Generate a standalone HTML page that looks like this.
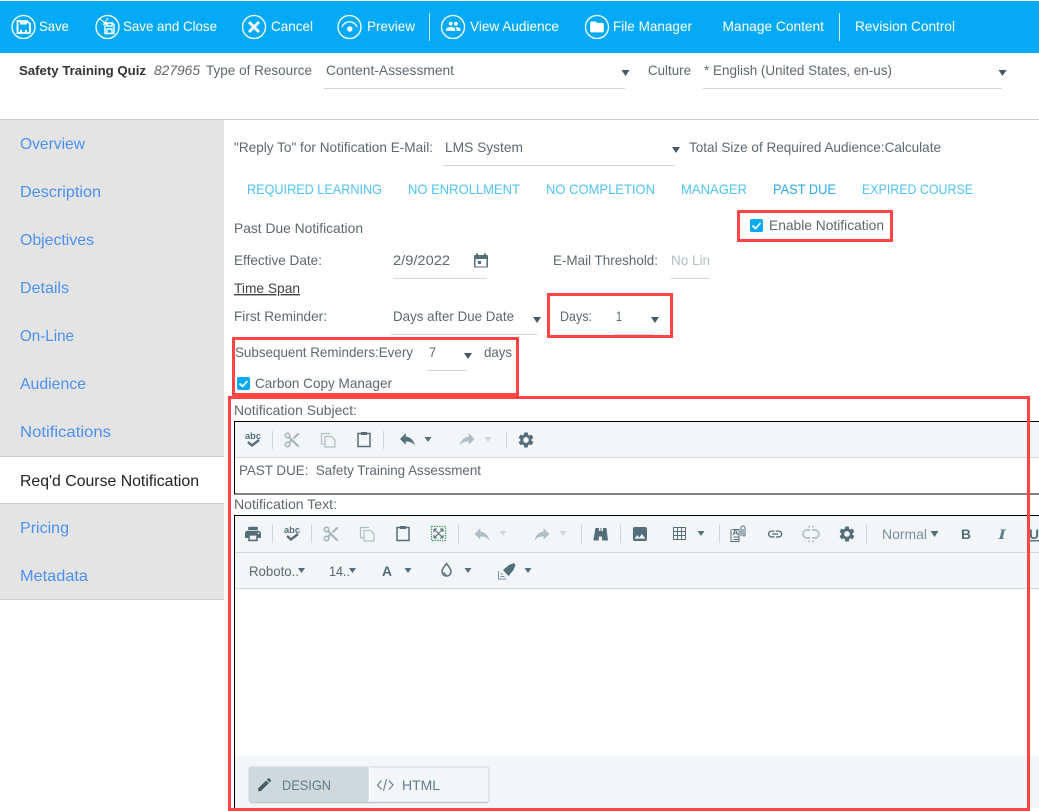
<!DOCTYPE html>
<html lang="en">
<head>
<meta charset="utf-8">
<title>Safety Training Quiz</title>
<style>
html,body{margin:0;padding:0;background:#fff;width:1039px;height:811px;overflow:hidden}
svg{display:block;position:absolute;left:0;top:0}
text{font-family:"Liberation Sans",sans-serif;font-size:14px;fill:#5c6870}
.w{fill:#fff}
.s{font-size:16px;fill:#4d90f0}
.t{fill:#4fc3f7;font-size:14px}
.l{stroke:#cfd8dc;stroke-width:1;fill:none}
.i{fill:#546e7a}
.d{fill:#b0bec5}
.r{fill:none;stroke:#ff4444;stroke-width:3}
</style>
</head>
<body>
<svg width="1039" height="811" viewBox="0 0 1039 811" xmlns="http://www.w3.org/2000/svg">
<defs>
<path id="gear" d="M19.14 12.94c.04-.3.06-.61.06-.94 0-.32-.02-.64-.07-.94l2.03-1.58c.18-.14.23-.41.12-.61l-1.92-3.32c-.12-.22-.37-.29-.59-.22l-2.39.96c-.5-.38-1.03-.7-1.62-.94l-.36-2.54c-.04-.24-.24-.41-.48-.41h-3.84c-.24 0-.43.17-.47.41l-.36 2.54c-.59.24-1.13.57-1.62.94l-2.39-.96c-.22-.08-.47 0-.59.22L2.74 8.87c-.12.21-.08.47.12.61l2.03 1.58c-.05.3-.09.63-.09.94s.02.64.07.94l-2.03 1.58c-.18.14-.23.41-.12.61l1.92 3.32c.12.22.37.29.59.22l2.39-.96c.5.38 1.03.7 1.62.94l.36 2.54c.05.24.24.41.48.41h3.84c.24 0 .44-.17.47-.41l.36-2.54c.59-.24 1.13-.56 1.62-.94l2.39.96c.22.08.47 0 .59-.22l1.92-3.32c.12-.22.07-.47-.12-.61l-2.01-1.58zM12 15.6c-1.98 0-3.6-1.62-3.6-3.6s1.62-3.6 3.6-3.6 3.6 1.62 3.6 3.6-1.62 3.6-3.6 3.6z"/>
<path id="undo" d="M10 9V5l-7 7 7 7v-4.100c5 0 8.500 1.600 11 5.100-1-5-4-10-11-11z"/>
<path id="redo" d="M14 9V5l7 7-7 7v-4.100c-5 0-8.500 1.600-11 5.100 1-5 4-10 11-11z"/>
<path id="cut" d="M9.64 7.64c.23-.5.36-1.05.36-1.64 0-2.21-1.79-4-4-4S2 3.79 2 6s1.79 4 4 4c.59 0 1.14-.13 1.64-.36L10 12l-2.36 2.36C7.14 14.13 6.59 14 6 14c-2.21 0-4 1.79-4 4s1.79 4 4 4 4-1.79 4-4c0-.59-.13-1.14-.36-1.64L12 14l7 7h3v-1L9.64 7.64zM6 8c-1.1 0-2-.89-2-2s.9-2 2-2 2 .89 2 2-.9 2-2 2zm0 12c-1.1 0-2-.89-2-2s.9-2 2-2 2 .89 2 2-.9 2-2 2zM19 3l-6 6 2 2 7-7V3z"/>
<path id="link" d="M3.9 12c0-1.71 1.39-3.1 3.1-3.1h4V7H7c-2.76 0-5 2.24-5 5s2.24 5 5 5h4v-1.9H7c-1.71 0-3.1-1.39-3.1-3.1zM8 13h8v-2H8v2zm9-6h-4v1.9h4c1.71 0 3.1 1.39 3.1 3.1s-1.39 3.1-3.1 3.1h-4V17h4c2.76 0 5-2.24 5-5s-2.24-5-5-5z"/>
<g id="copy" fill="none" stroke-width="1.200"><path d="M2-6.500h-8.500v10.500h3.500"/><path d="M-3-3.500h6.500l3.500 3.500v7h-10z"/></g>
<g id="paste"><path fill="none" stroke="#546e7a" stroke-width="1.500" d="M-3-6h-3v13H6V-6H3"/><rect x="-3" y="-7.500" width="6" height="3" fill="#546e7a"/></g>
<g id="abc"><text x="-8" y="0" style="font-size:9.500px;font-weight:bold;fill:#546e7a" textLength="16" lengthAdjust="spacingAndGlyphs">abc</text><path d="M-5 3l4 3.500L6 1" fill="none" stroke="#546e7a" stroke-width="2.400"/></g>
</defs>

<!-- top toolbar -->
<rect x="0" y="1" width="1039" height="52" fill="#05aaf6"/>
<g fill="none" stroke="#fff" stroke-width="1.300">
<circle cx="23.500" cy="27" r="11.500"/><circle cx="107.500" cy="27" r="11.500"/><circle cx="254" cy="27" r="11.500"/><circle cx="349.500" cy="27" r="11.500"/><circle cx="453" cy="27" r="11.500"/><circle cx="597" cy="27" r="11.500"/>
</g>
<path d="M17.500 21h9.500l3 3V33H17.500z" fill="none" stroke="#fff" stroke-width="1.800"/>
<rect x="20" y="21" width="7" height="3.500" fill="#fff"/><rect x="20" y="30" width="2" height="3" fill="#fff"/><rect x="25" y="30" width="2" height="3" fill="#fff"/>
<path d="M105 23h7.500l1.500 1.500V33.500h-9zM107 23v3h5v-3M107 29h5v4.500h-5z" fill="none" stroke="#fff" stroke-width="1.400"/>
<path d="M100 19l9 7M108 18l-5 7" stroke="#fff" stroke-width="1" fill="none"/>
<path d="M249 22l10 10M259 22l-10 10" stroke="#fff" stroke-width="2.800" fill="none"/>
<path d="M342 27a8 8 0 0 1 15 0" fill="none" stroke="#fff" stroke-width="1.300"/><circle cx="349.800" cy="29" r="2.700" fill="#fff"/>
<path transform="translate(445.500 18.500) scale(.65)" fill="#fff" d="M16 11c1.660 0 2.990-1.340 2.990-3S17.660 5 16 5c-1.660 0-3 1.340-3 3s1.340 3 3 3zm-8 0c1.660 0 2.990-1.340 2.990-3S9.660 5 8 5C6.340 5 5 6.340 5 8s1.340 3 3 3zm0 2c-2.330 0-7 1.170-7 3.500V19h14v-2.500c0-2.330-4.670-3.500-7-3.500zm8 0c-.29 0-.62.02-.97.05 1.160.84 1.970 1.970 1.970 3.450V19h6v-2.500c0-2.330-4.670-3.500-7-3.500z"/>
<path transform="translate(588.800 18.800) scale(.68)" fill="#fff" d="M10 4H4c-1.100 0-1.990.9-1.990 2L2 18c0 1.100.9 2 2 2h16c1.100 0 2-.9 2-2V8c0-1.100-.9-2-2-2h-8l-2-2z"/>
<path d="M429.500 13v28M839.500 13v28" stroke="#cfeefd" stroke-width="1"/>
<text class="w" x="39" y="31" textLength="30" lengthAdjust="spacingAndGlyphs">Save</text>
<text class="w" x="123" y="31" textLength="94" lengthAdjust="spacingAndGlyphs">Save and Close</text>
<text class="w" x="271" y="31" textLength="42" lengthAdjust="spacingAndGlyphs">Cancel</text>
<text class="w" x="367" y="31" textLength="48" lengthAdjust="spacingAndGlyphs">Preview</text>
<text class="w" x="470" y="31" textLength="89" lengthAdjust="spacingAndGlyphs">View Audience</text>
<text class="w" x="613" y="31" textLength="79" lengthAdjust="spacingAndGlyphs">File Manager</text>
<text class="w" x="722.500" y="31" textLength="101.500" lengthAdjust="spacingAndGlyphs">Manage Content</text>
<text class="w" x="855" y="31" textLength="100" lengthAdjust="spacingAndGlyphs">Revision Control</text>

<!-- header -->
<text x="19" y="75" style="font-weight:bold;fill:#333;font-size:13px" textLength="127" lengthAdjust="spacingAndGlyphs">Safety Training Quiz</text>
<text x="154" y="75" style="font-style:italic;fill:#666" textLength="46" lengthAdjust="spacingAndGlyphs">827965</text>
<text x="206" y="75" textLength="106" lengthAdjust="spacingAndGlyphs">Type of Resource</text>
<text x="326" y="75" textLength="128" lengthAdjust="spacingAndGlyphs">Content-Assessment</text>
<path class="l" d="M324 88.500h301M703 88.500h299"/>
<path d="M621.500 70h8l-4 6z M998.500 70h8l-4 6z" fill="#455a64"/>
<text x="648" y="75" textLength="43" lengthAdjust="spacingAndGlyphs">Culture</text>
<text x="704" y="75" textLength="188" lengthAdjust="spacingAndGlyphs">* English (United States, en-us)</text>
<path d="M0 119.500h1039" stroke="#cfcfcf" stroke-width="1"/>

<!-- sidebar -->
<rect x="0" y="120" width="224" height="480" fill="#e4e4e4"/>
<rect x="0" y="457" width="224" height="46" fill="#fff"/>
<path d="M0 456.500h224M0 503.500h224M0 599.500h224" stroke="#cfcfcf" stroke-width="1"/>
<text class="s" x="20" y="149" textLength="65" lengthAdjust="spacingAndGlyphs">Overview</text>
<text class="s" x="20" y="197" textLength="81" lengthAdjust="spacingAndGlyphs">Description</text>
<text class="s" x="20" y="245" textLength="74" lengthAdjust="spacingAndGlyphs">Objectives</text>
<text class="s" x="20" y="293" textLength="49" lengthAdjust="spacingAndGlyphs">Details</text>
<text class="s" x="20" y="341" textLength="54" lengthAdjust="spacingAndGlyphs">On-Line</text>
<text class="s" x="20" y="389" textLength="66" lengthAdjust="spacingAndGlyphs">Audience</text>
<text class="s" x="20" y="437" textLength="91" lengthAdjust="spacingAndGlyphs">Notifications</text>
<text class="s" x="20" y="486" textLength="179" lengthAdjust="spacingAndGlyphs" style="fill:#222">Req'd Course Notification</text>
<text class="s" x="20" y="533" textLength="49" lengthAdjust="spacingAndGlyphs">Pricing</text>
<text class="s" x="20" y="581" textLength="68" lengthAdjust="spacingAndGlyphs">Metadata</text>

<!-- form -->
<text x="234" y="152" textLength="199" lengthAdjust="spacingAndGlyphs">"Reply To" for Notification E-Mail:</text>
<text x="445" y="152" textLength="78" lengthAdjust="spacingAndGlyphs">LMS System</text>
<path class="l" d="M443 165.500h232"/>
<path d="M672 147h8l-4 6z" fill="#455a64"/>
<text x="689" y="152" textLength="252" lengthAdjust="spacingAndGlyphs">Total Size of Required Audience:Calculate</text>

<text class="t" x="247" y="194" textLength="135" lengthAdjust="spacingAndGlyphs">REQUIRED LEARNING</text>
<text class="t" x="408" y="194" textLength="112" lengthAdjust="spacingAndGlyphs">NO ENROLLMENT</text>
<text class="t" x="546" y="194" textLength="109" lengthAdjust="spacingAndGlyphs">NO COMPLETION</text>
<text class="t" x="681" y="194" textLength="66" lengthAdjust="spacingAndGlyphs">MANAGER</text>
<text class="t" x="773" y="194" textLength="63" lengthAdjust="spacingAndGlyphs" style="fill:#29a9ec">PAST DUE</text>
<text class="t" x="862" y="194" textLength="111" lengthAdjust="spacingAndGlyphs">EXPIRED COURSE</text>
<rect x="760" y="211" width="89" height="2" fill="#03a9f4"/>

<text x="234" y="233" textLength="129" lengthAdjust="spacingAndGlyphs">Past Due Notification</text>
<rect x="750" y="219" width="13" height="13" rx="2" fill="#05aaf6"/>
<path d="M752.500 225.500l3 3 5-5.500" fill="none" stroke="#fff" stroke-width="1.600"/>
<text x="769" y="230" textLength="115" lengthAdjust="spacingAndGlyphs">Enable Notification</text>

<text x="234" y="265" textLength="88" lengthAdjust="spacingAndGlyphs">Effective Date:</text>
<text x="393" y="265" textLength="57" lengthAdjust="spacingAndGlyphs">2/9/2022</text>
<path class="l" d="M393 278.500h94M671 278.500h39M391 334.500h146M614 334.500h40M427 370.500h40"/>
<path d="M476 253.500v1.500h-1a1 1 0 0 0-1 1v10.500a1 1 0 0 0 1 1h12a1 1 0 0 0 1-1V256a1 1 0 0 0-1-1h-1v-1.500h-2V255h-6v-1.500zM475.500 259h11v7.500h-11z" fill="#546e7a" fill-rule="evenodd"/>
<rect x="478" y="261" width="3" height="3" fill="#546e7a"/>
<text x="553" y="265" textLength="105" lengthAdjust="spacingAndGlyphs">E-Mail Threshold:</text>
<text x="671" y="265" textLength="39" lengthAdjust="spacingAndGlyphs" style="fill:#b0bec5">No Lin</text>
<text x="234" y="293" textLength="66" lengthAdjust="spacingAndGlyphs" style="text-decoration:underline;fill:#444">Time Span</text>
<text x="234" y="321" textLength="93" lengthAdjust="spacingAndGlyphs">First Reminder:</text>
<text x="393" y="321" textLength="121" lengthAdjust="spacingAndGlyphs">Days after Due Date</text>
<path d="M533 317h8l-4 6zM651 317h8l-4 6zM464 353h8l-4 6z" fill="#455a64"/>
<text x="560" y="321" textLength="32" lengthAdjust="spacingAndGlyphs">Days:</text>
<text x="616" y="321" textLength="6" lengthAdjust="spacingAndGlyphs">1</text>
<text x="235" y="357" textLength="178" lengthAdjust="spacingAndGlyphs">Subsequent Reminders:Every</text>
<text x="429" y="357" textLength="7" lengthAdjust="spacingAndGlyphs">7</text>
<text x="484" y="357" textLength="28" lengthAdjust="spacingAndGlyphs">days</text>
<rect x="237" y="377" width="13" height="13" rx="2" fill="#05aaf6"/>
<path d="M239.500 383.500l3 3 5-5.500" fill="none" stroke="#fff" stroke-width="1.600"/>
<text x="255" y="388" textLength="137" lengthAdjust="spacingAndGlyphs">Carbon Copy Manager</text>

<text x="234" y="415" textLength="123" lengthAdjust="spacingAndGlyphs">Notification Subject:</text>

<!-- subject editor -->
<rect x="235" y="422" width="804" height="35" fill="#f2f6f8"/>
<path d="M235 457.500h804" stroke="#cfd8dc"/>
<path d="M1039 421.500H234.500V494H1039" fill="none" stroke="#000" stroke-width="1"/>
<path d="M272.500 431v18M383.500 431v18M506.500 431v18" stroke="#cfd8dc"/>
<use href="#abc" x="253" y="439"/>
<use href="#cut" transform="translate(283 431) scale(.75)" fill="#a6b5bd"/>
<use href="#copy" x="328" y="440" stroke="#b0bec5"/>
<use href="#paste" x="364" y="439.500"/>
<use href="#undo" transform="translate(397.500 429) scale(.83)" fill="#546e7a"/>
<path d="M424.500 437h7l-3.500 5z" fill="#546e7a"/>
<use href="#redo" transform="translate(457.200 429) scale(.83)" fill="#b0bec5"/>
<path d="M484.500 437h7l-3.500 5z" fill="#cfd8dc"/>
<use href="#gear" transform="translate(516.600 430.600) scale(.78)" fill="#546e7a"/>
<text x="239" y="475" textLength="242" lengthAdjust="spacingAndGlyphs" xml:space="preserve">PAST DUE:  Safety Training Assessment</text>

<text x="234" y="509" textLength="103" lengthAdjust="spacingAndGlyphs">Notification Text:</text>

<!-- text editor -->
<rect x="235" y="516" width="804" height="72" fill="#f2f6f8"/>
<path d="M235 552.500h804M235 588.500h804" stroke="#cfd8dc"/>
<rect x="235" y="756" width="804" height="52" fill="#f2f6f8"/>
<path d="M1039 515.500H234.500V811" fill="none" stroke="#000" stroke-width="1"/>
<path d="M272.500 525v18M311.500 525v18M458.500 525v18M581.500 525v18M620.500 525v18M719.500 525v18M866.500 525v18" stroke="#cfd8dc"/>
<path transform="translate(243.400 524.400) scale(.8)" fill="#546e7a" d="M19 8H5c-1.660 0-3 1.340-3 3v6h4v4h12v-4h4v-6c0-1.660-1.340-3-3-3zm-3 11H8v-5h8v5zm3-7c-.55 0-1-.45-1-1s.45-1 1-1 1 .45 1 1-.45 1-1 1zm-1-9H6v4h12V3z"/>
<use href="#abc" x="292" y="533"/>
<use href="#cut" transform="translate(322 525) scale(.75)" fill="#a6b5bd"/>
<use href="#copy" x="367" y="534" stroke="#b0bec5"/>
<use href="#paste" x="403" y="533.500"/>
<rect x="431.500" y="526.500" width="14" height="14" fill="none" stroke="#4f9a6a" stroke-width="1.200" stroke-dasharray="1.500 1"/>
<path d="M434 529l9 9M443 529l-9 9M434 529h3M434 529v3M443 538h-3M443 538v-3M443 529h-3M443 529v3M434 538h3M434 538v-3" stroke="#546e7a" stroke-width="1.100" fill="none"/>
<use href="#undo" transform="translate(472 524) scale(.83)" fill="#b0bec5"/>
<path d="M499.500 531h7l-3.500 5z" fill="#cfd8dc"/>
<use href="#redo" transform="translate(532 524) scale(.83)" fill="#b0bec5"/>
<path d="M559.500 531h7l-3.500 5z" fill="#cfd8dc"/>
<path d="M595.500 528h3.500v3h1.500v-3h1v3h1.500v-3h3.500l1.500 12.500h-5.800l-.4-4h-2.800l-.4 4h-5.300z" fill="#546e7a"/>
<path transform="translate(630.600 524.600) scale(.78)" fill="#546e7a" d="M21 19V5c0-1.100-.9-2-2-2H5c-1.100 0-2 .9-2 2v14c0 1.100.9 2 2 2h14c1.100 0 2-.9 2-2zM8.500 13.500l2.500 3.010L14.500 12l4.500 6H5l3.500-4.500z"/>
<path d="M673.500 527.500h12v12h-12zM677.500 527.500v12M681.500 527.500v12M673.500 531.500h12M673.500 535.500h12" fill="none" stroke="#546e7a" stroke-width="1"/>
<path d="M697.500 531h7l-3.500 5z" fill="#546e7a"/>
<path d="M732 529.500h7v12h-8v-12M733.500 537h5M733.500 539.500h5" fill="none" stroke="#546e7a" stroke-width="1"/>
<path d="M741 536v-8a2 2 0 0 1 4 0v7a1 1 0 0 1-2 0v-6" fill="none" stroke="#546e7a" stroke-width="1"/>
<text x="732.500" y="535" style="font-size:8px;font-weight:bold;fill:#546e7a">A</text>
<use href="#link" transform="translate(766.500 525.400) scale(.72)" fill="#546e7a"/>
<path d="M810 530h-3a4 4 0 0 0 0 8h3M812 530h3a4 4 0 0 1 0 8h-3M809.500 527.500l-1-1.500M812.500 527.500l1-1.500M809.500 540.500l-1 1.500M812.500 540.500l1 1.500" fill="none" stroke="#b0bec5" stroke-width="1.700"/>
<use href="#gear" transform="translate(837.600 524.600) scale(.78)" fill="#546e7a"/>
<text x="882" y="539" textLength="45" lengthAdjust="spacingAndGlyphs" style="fill:#78909c">Normal</text>
<path d="M930.500 531h8l-4 6z" fill="#546e7a"/>
<text x="961" y="539" style="font-weight:bold;fill:#546e7a" textLength="10" lengthAdjust="spacingAndGlyphs">B</text>
<text x="998" y="539" style="font-family:'Liberation Serif',serif;font-style:italic;font-weight:bold;fill:#607d8b;font-size:15px" textLength="8" lengthAdjust="spacingAndGlyphs">I</text>
<text x="1029" y="539" style="font-weight:bold;fill:#546e7a;text-decoration:underline" textLength="10" lengthAdjust="spacingAndGlyphs">U</text>

<text x="249" y="576" textLength="50" lengthAdjust="spacingAndGlyphs">Roboto..</text>
<path d="M298 568h7l-3.500 5zM349 568h7l-3.500 5zM404.500 568h7l-3.500 5zM464.500 568h7l-3.500 5zM524.500 568h7l-3.500 5z" fill="#546e7a"/>
<text x="329" y="576" textLength="21" lengthAdjust="spacingAndGlyphs">14..</text>
<text x="382" y="576" style="font-weight:bold;fill:#546e7a;font-size:14px" textLength="10" lengthAdjust="spacingAndGlyphs">A</text>
<path d="M446.500 563.500c2 3 4.500 5 4.500 8a4.500 4.500 0 0 1-9 0c0-3 2.500-5 4.500-8z" fill="none" stroke="#546e7a" stroke-width="1.500"/>
<path d="M444 572a2.500 2.500 0 0 0 2.500 2.500" fill="none" stroke="#546e7a" stroke-width="1.200"/>
<path d="M503 570l6-5 2.500-1 2.500-1 1.500 2-1 2.500-1 2.500-5 6z" fill="#546e7a"/>
<path d="M498.500 571v8h8M500.500 574h2.500M500.500 576.500h4" fill="none" stroke="#78909c" stroke-width="1"/>

<!-- design / html -->
<rect x="249" y="767" width="240" height="35" rx="2" fill="#f2f6f8" stroke="#cfd8dc" stroke-width="1"/>
<rect x="249" y="767" width="120" height="35" rx="2" fill="#cfd8dc"/>
<path d="M369.500 767v35" stroke="#fff" stroke-width="1.500"/>
<path d="M250 802.700h238" stroke="#bcc5ca" stroke-width="1"/>
<path transform="translate(256 776) scale(.72)" fill="#455a64" d="M3 17.250V21h3.750L17.810 9.940l-3.750-3.750L3 17.250zM20.710 7.040c.39-.39.39-1.020 0-1.410l-2.340-2.340c-.39-.39-1.020-.39-1.410 0l-1.830 1.830 3.750 3.750 1.830-1.830z"/>
<text x="282" y="790" textLength="49" lengthAdjust="spacingAndGlyphs" style="fill:#607d8b">DESIGN</text>
<path d="M381.500 780.500l-4 4.500 4 4.500M389 780.500l4 4.500-4 4.500M386.500 779l-3 12" fill="none" stroke="#607d8b" stroke-width="1.100"/>
<text x="402" y="790" textLength="38" lengthAdjust="spacingAndGlyphs" style="fill:#607d8b">HTML</text>

<!-- red annotation boxes -->
<rect class="r" x="738.500" y="211.500" width="153" height="29"/>
<rect class="r" x="548.500" y="294.500" width="123" height="42"/>
<rect class="r" x="233.500" y="338.500" width="284" height="56"/>
<rect class="r" x="229.500" y="397.500" width="799" height="412"/>
</svg>
</body>
</html>
